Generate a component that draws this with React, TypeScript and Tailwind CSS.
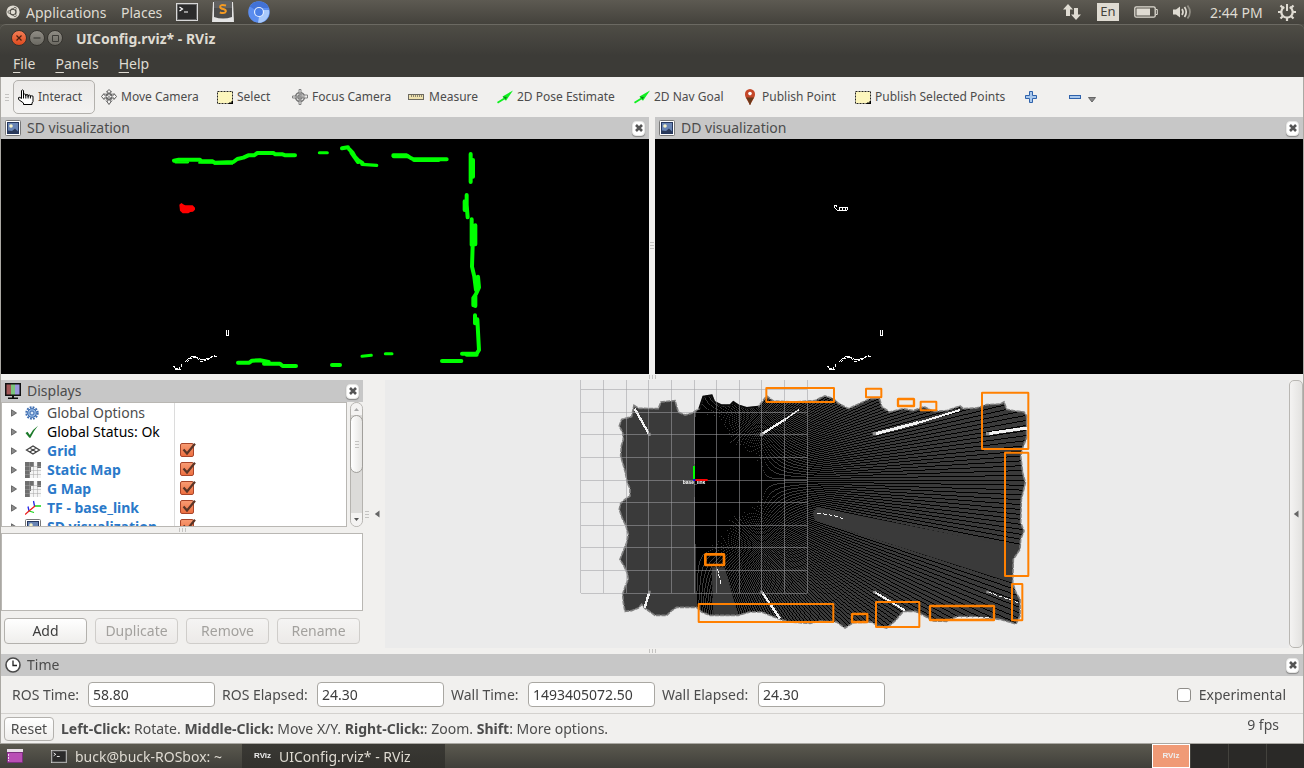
import React from 'react';
import type { ReactNode } from 'react';

/* ---------- small icons ---------- */

const UbuntuIcon = () => (
  <svg width="14" height="14" viewBox="0 0 14 14" aria-hidden="true">
    <circle cx="7" cy="7" r="6.6" fill="#dfdbd2" />
    <circle cx="7" cy="7" r="3" fill="none" stroke="#4c4a44" strokeWidth="1.3" />
    <g fill="#dfdbd2" stroke="#4c4a44" strokeWidth=".7">
      <circle cx="3.2" cy="7" r="1.3" />
      <circle cx="9" cy="3.6" r="1.3" />
      <circle cx="9" cy="10.4" r="1.3" />
    </g>
  </svg>
);

const TerminalIcon = ({ small = false }: { small?: boolean }) => (
  <svg width={small ? 16 : 22} height={small ? 13 : 18} viewBox="0 0 22 18" aria-hidden="true">
    <rect x=".5" y=".5" width="21" height="17" fill="#2b2b2b" stroke="#d8d8d8" />
    <rect x="1.5" y="1.5" width="19" height="15" fill="none" stroke="#8a8a8a" strokeWidth=".6" />
    <path d="M3.5 4l3 2-3 2M8 9h4" fill="none" stroke="#fff" strokeWidth="1.2" />
  </svg>
);

const SublimeIcon = () => (
  <svg width="24" height="22" viewBox="0 0 24 22" aria-hidden="true">
    <path d="M2 1h20l1 20H1z" fill="#e4e4e4" />
    <path d="M3 0h18v16q-9 3-18 0z" fill="#4d4d4d" />
    <path d="M3 0h18v7H3z" fill="#616161" />
    <path d="M15 4.500Q9 3 9.200 6q.2 1.500 3 2t2.600 2.500q-.8 2.500-6 1" fill="none" stroke="#f49a23" strokeWidth="2" />
  </svg>
);

const ChromiumIcon = () => (
  <svg width="22" height="22" viewBox="0 0 22 22" aria-hidden="true">
    <circle cx="11" cy="11" r="10.800" fill="#5b8def" />
    <path d="M11 11L1.800 5.500A10.800 10.800 0 0 1 20.800 7H11z" fill="#4272d6" />
    <path d="M11 16l4.500-7h5.500A10.800 10.800 0 0 1 10 21.800z" fill="#a8c9fb" />
    <circle cx="11" cy="11" r="5" fill="#e8f0fe" />
    <circle cx="11" cy="11" r="3.900" fill="#4a7fe6" />
  </svg>
);

const NetworkIcon = () => (
  <svg width="18" height="16" viewBox="0 0 18 16" fill="#dfdbd2" aria-hidden="true">
    <path d="M5 0l5 5.500H7V12H3V5.500H0zM13 16l-5-5.500h3V4h4v6.500h3z" />
  </svg>
);

const BatteryIcon = () => (
  <svg width="24" height="12" viewBox="0 0 24 12" aria-hidden="true">
    <rect x=".8" y=".8" width="20.400" height="10.400" rx="1.500" fill="none" stroke="#dfdbd2" strokeWidth="1.300" />
    <rect x="2.500" y="2.500" width="13.500" height="7" fill="#dfdbd2" />
    <path d="M22 3.500h1.300v5H22" fill="none" stroke="#dfdbd2" />
  </svg>
);

const SoundIcon = () => (
  <svg width="20" height="16" viewBox="0 0 20 16" aria-hidden="true">
    <path d="M0 5.500h3L7 2.500v11L3 10.500H0z" fill="#dfdbd2" />
    <path d="M9 5q2 3 0 6M11.500 3q3.500 5 0 10" fill="none" stroke="#dfdbd2" strokeWidth="1.700" />
    <path d="M14.500 1.500q5 6.500 0 13" fill="none" stroke="#918e85" strokeWidth="1.700" />
  </svg>
);

const PowerGearIcon = () => (
  <svg width="18" height="18" viewBox="0 0 18 18" fill="none" stroke="#dfdbd2" aria-hidden="true">
    <path d="M6.300 4A5.700 5.700 0 1 0 11.700 4" strokeWidth="2.200" />
    <path d="M9 1v7" strokeWidth="2" />
    <path d="M2.500 2.500l2.300 2.300M15.500 2.500l-2.300 2.300M0 9h3.500M14.500 9H18M2.500 15.500l2.300-2.300M15.500 15.500l-2.300-2.300M9 14.500V18" strokeWidth="2.200" />
  </svg>
);

const HandIcon = () => (
  <svg width="16" height="16" viewBox="0 0 16 16" aria-hidden="true" fill="#fff" stroke="#000">
    <path d="M3.500 9.500V1.500q1-1.200 2 0V7V5.500q1-1 2.300 0V7 6q1.200-1 2.300 0v1.500V6.500q1-1 2.300 0V8v-.8q1.200-.8 2.600 0V12.500l-1 1.500v1.500h-8.500V14L.6 10.500V8.500q1-.8 2.900 1z" />
    <path d="M5.500 7v2.500M7.800 7v2.500M10.100 7v2.500M12.400 8v1.500" fill="none" />
  </svg>
);

const MoveIcon = () => (
  <svg width="16" height="16" viewBox="0 0 16 16" aria-hidden="true" fill="#f4f3f2" stroke="#5d5d5d">
    <path d="M8 .5l2.500 2.500H9v3h4V4.500L15.500 7.500 13 10.500V9H9v3h1.500L8 15.500 5.500 12H7V9H3v1.500L.5 7.500 3 4.500V6h4V3H5.500z" />
    <circle cx="8" cy="7.500" r="3" fill="none" />
    <path d="M4.500 4l7 7.500M11.500 4l-7 7.500" strokeWidth=".6" />
  </svg>
);

const FocusIcon = () => (
  <svg width="16" height="16" viewBox="0 0 16 16" aria-hidden="true" fill="none" stroke="#777">
    <circle cx="8" cy="8" r="4.500" strokeWidth="1.500" />
    <circle cx="8" cy="8" r="2" />
    <path d="M7 .5h2V6h6.500v3H9v6.500H7V9H.5V7H7z" fill="#f1f0ee" fillOpacity=".6" strokeWidth=".9" />
    <path d="M8 4v8M4 8h8" />
  </svg>
);

const SelectIcon = () => (
  <svg width="16" height="16" viewBox="0 0 16 16" aria-hidden="true">
    <rect x=".5" y="2.500" width="15" height="12" fill="#fdf6bd" stroke="#222" strokeDasharray="2 1" />
    <path d="M16 12v3h-4v-1.500h2.500V12z" fill="#000" />
  </svg>
);

const RulerIcon = () => (
  <svg width="17" height="16" viewBox="0 0 17 16" aria-hidden="true">
    <rect x=".5" y="5.500" width="15" height="5" fill="#efe2ae" stroke="#6d6a60" />
    <path d="M3.500 6v2M5.500 6v2M7.500 6v2M9.500 6v2M11.500 6v2M13.500 6v2" stroke="#8c8672" />
  </svg>
);

const PoseIcon = () => (
  <svg width="16" height="16" viewBox="0 0 16 16" aria-hidden="true">
    <path d="M16 1.500L5.500 7.500l1 1.500L0 13l1 1.500 6.500-4 1.500 1.200z" fill="#10f020" />
    <path d="M6 7.500l4 .5-1.500 2.500z" fill="#0a8a18" />
  </svg>
);

const PinIcon = () => (
  <svg width="16" height="16" viewBox="0 0 16 16" aria-hidden="true">
    <path d="M8 0a5 5 0 0 1 5 5.200C13 9 9.500 12 8.200 16H7.800C6.500 12 3 9 3 5.200A5 5 0 0 1 8 0z" fill="#c5482a" />
    <path d="M4 8.500Q6.500 12 7.800 16h.4Q9.500 12 12 8.500z" fill="#6a3a1b" />
    <circle cx="8" cy="4.600" r="1.800" fill="#fff" />
  </svg>
);

const PlusIcon = () => (
  <svg width="12" height="12" viewBox="0 0 12 12" aria-hidden="true">
    <path d="M4.500.5h3v4h4v3h-4v4h-3v-4h-4v-3h4z" fill="#a9c8ec" stroke="#2f62ab" />
  </svg>
);

const MinusIcon = () => (
  <svg width="12" height="12" viewBox="0 0 12 12" aria-hidden="true">
    <rect x=".5" y="4.500" width="11" height="3" fill="#a9c8ec" stroke="#2f62ab" />
  </svg>
);

const PictureIcon = () => (
  <svg width="16" height="16" viewBox="0 0 16 16" aria-hidden="true">
    <rect x=".5" y=".5" width="15" height="15" rx="1" fill="#fff" stroke="#777" />
    <rect x="2.500" y="2.500" width="11" height="11" fill="#6884b4" stroke="#25375e" />
    <path d="M3 10.500l4 .5 3-2.500 3 3v1.500H3z" fill="#2a3959" />
    <circle cx="6" cy="6" r="1.800" fill="#f6f3c8" />
  </svg>
);

const MonitorIcon = () => (
  <svg width="16" height="16" viewBox="0 0 16 16" aria-hidden="true">
    <rect width="16" height="13" fill="#111" />
    <path d="M1.500 1.500H6v10H1.500z" fill="#a15656" />
    <path d="M6 1.500h4v10H6z" fill="#7cc47c" />
    <path d="M10 1.500h4.500v10H10z" fill="#9a97dc" />
    <path d="M7 13h2v1.500H7zM3 14.500h10V16H3z" fill="#111" />
  </svg>
);

const ClockIcon = () => (
  <svg width="16" height="16" viewBox="0 0 16 16" aria-hidden="true">
    <circle cx="8" cy="8" r="7" fill="#fff" stroke="#4a4a4a" strokeWidth="1.600" />
    <path d="M8 3.500V8.500h4" fill="none" stroke="#222" strokeWidth="1.300" />
  </svg>
);

const GearIcon = () => (
  <svg width="14" height="14" viewBox="0 0 14 14" aria-hidden="true" fill="none" stroke="#3b6cb1">
    <circle cx="7" cy="7" r="5.700" strokeWidth="2" strokeDasharray="1.800 1.180" />
    <circle cx="7" cy="7" r="4.400" fill="#8fb4e2" />
    <circle cx="7" cy="7" r="2" fill="#dbe8f7" />
  </svg>
);

const OkIcon = () => (
  <svg width="14" height="14" viewBox="0 0 14 14" aria-hidden="true">
    <path d="M.5 8l2-1.200L4.800 10Q8 4 13 .8 8.500 6 5.500 12.800H4.300z" fill="#1c7a2a" />
  </svg>
);

const GridIcon = () => (
  <svg width="16" height="16" viewBox="0 0 16 16" aria-hidden="true" fill="none" stroke="#444">
    <path d="M1.500 7L8 3l6.500 4L8 11zM4.700 5l6.600 4M11.300 5L4.700 9" strokeWidth="1.300" />
  </svg>
);

const MapIcon = () => (
  <svg width="16" height="16" viewBox="0 0 16 16" aria-hidden="true">
    <path d="M0 0h16v16H0z" fill="#f4f4f4" />
    <path d="M0 0h9v5H6v5H5v6H0zM12 0h4v6h-4z" fill="#6f6f6f" />
    <path d="M0 4.500h16M0 8.500h16M0 12.500h16M4.500 0v16M8.500 0v16M12.500 0v16" stroke="#a5a5a5" strokeWidth=".5" />
  </svg>
);

const TfIcon = () => (
  <svg width="16" height="16" viewBox="0 0 16 16" aria-hidden="true" fill="none" strokeWidth="1.300">
    <path d="M9.500 6L8.500 1M4 11L3 6.500" stroke="#2424e8" />
    <path d="M10 6h6M4 11l5 1.500" stroke="#16d416" />
    <path d="M10 6L4 11 0 14.500" stroke="#ee1c1c" />
  </svg>
);

/* ---------- shared controls ---------- */

const CloseButton = ({ label }: { label: string }) => (
  <button
    type="button"
    aria-label={label}
    className="flex h-[15px] w-[13px] items-center justify-center rounded-[4px] border border-[#e8e8e6] bg-white shadow-[0_1px_1px_#888]"
  >
    <svg width="8" height="8" viewBox="0 0 8 8" aria-hidden="true">
      <path d="M1 1l6 6M7 1L1 7" stroke="#555" strokeWidth="2.600" />
    </svg>
  </button>
);

const DockHeader = ({ title, icon }: { title: string; icon: ReactNode }) => (
  <header className="flex h-[22px] shrink-0 items-center justify-between bg-[#c7c7c7] pr-1 pl-1">
    <h2 className="flex items-center gap-1.5 text-[14px] leading-[22px] text-[#4c4c4c]">
      {icon}
      {title}
    </h2>
    <CloseButton label={`Close ${title}`} />
  </header>
);

const Grip = ({ vertical = false }: { vertical?: boolean }) => (
  <span className={vertical ? 'flex flex-col gap-[2px]' : 'flex gap-[2px]'} aria-hidden="true">
    {[0, 1, 2].map((i) => (
      <span key={i} className={vertical ? 'h-px w-1 bg-[#c4c3c1]' : 'h-1 w-px bg-[#c4c3c1]'} />
    ))}
  </span>
);

const tools = [
  { label: 'Move Camera', icon: <MoveIcon />, width: 'w-[116px]' },
  { label: 'Select', icon: <SelectIcon />, width: 'w-[75px]' },
  { label: 'Focus Camera', icon: <FocusIcon />, width: 'w-[116px]' },
  { label: 'Measure', icon: <RulerIcon />, width: 'w-[89px]' },
  { label: '2D Pose Estimate', icon: <PoseIcon />, width: 'w-[137px]' },
  { label: '2D Nav Goal', icon: <PoseIcon />, width: 'w-[108px]' },
  { label: 'Publish Point', icon: <PinIcon />, width: 'w-[113px]' },
  { label: 'Publish Selected Points', icon: <SelectIcon />, width: 'w-[170px]' },
];

/* ---------- detection views ---------- */

const FloorTrace = () => (
  <g fill="none" stroke="#fff" strokeWidth="3" shapeRendering="crispEdges">
    <path d="M69 710h6v6h15v-6h6v-8M106 696l8-8 10-8h12l18 10 10-2 12-3 12-6h12" strokeDasharray="10 2" />
    <path d="M110 697l8-10 10-3h12l14 11 12-3 14-6 6-6 10-3" strokeDasharray="9 3" />
    <path d="M76 718h16M229 600v17h7v-17" />
  </g>
);

const SdView = () => (
  <svg viewBox="1 139 648 235" className="h-[235px] w-full bg-black" preserveAspectRatio="xMinYMin slice" role="img" aria-label="SD visualization view">
    <g transform="translate(150 130) scale(.33333)">
      <g fill="none" stroke="#0f0" strokeWidth="12" strokeLinecap="round" strokeLinejoin="round">
        <path d="M72 92L86 89H150L154 94H188L194 98L250 96L262 87L280 83L295 76H312L322 69H370L376 73H398L406 76H435" />
        <path d="M76 97h38M148 98h40M194 101h52" strokeWidth="7" />
        <path d="M508 68h24" strokeWidth="9" />
        <path d="M576 55l18-3M597 57l10 10 8 14 10 10 12 8M604 68l20 28" />
        <path d="M636 103l44 3" strokeWidth="10" />
        <path d="M730 76H770L784 85L790 88H890M792 90h74" />
        <path d="M731 79h42" />
        <path d="M962 72V156M969 90V140M950 195V225L953 262M944 214V240" />
        <path d="M965 268V345M976 286V343M968 345L966 410L973 440L978 480M984 440L987 472L978 492L970 504V526M976 498V528" />
        <path d="M975 556V580M982 568L987 660L980 671H936M950 674H980" />
        <path d="M264 698H298L306 692L330 691L356 696M342 701H390L398 708H438" />
        <path d="M546 705h24" />
        <path d="M636 679l28-3M706 671h20" strokeWidth="9" />
        <path d="M876 693h58" />
      </g>
      <path d="M88 224l6-5 8 5 4 2h22l7 7v6l-6 6-8 1-6 4H98l-8-8z" fill="#f00" />
      <FloorTrace />
    </g>
  </svg>
);

const DdView = () => (
  <svg viewBox="1 139 648 235" className="h-[235px] w-full bg-black" preserveAspectRatio="xMinYMin slice" role="img" aria-label="DD visualization view">
    <g transform="translate(150 130) scale(.33333)">
      <FloorTrace />
      <path d="M91 234v-8h6v6M94 235l6 6h30v-9h-24M106 234v6M115 234v6M124 234v6" fill="none" stroke="#fff" strokeWidth="3" shapeRendering="crispEdges" />
    </g>
  </svg>
);

/* ---------- map view ---------- */

const outline =
  '222,88 235,97 295,98 303,78 345,74 355,108 375,117 395,112 418,98 430,62 455,58 463,78 485,88 510,88 520,78 535,88 560,96 595,92 620,60 640,75 700,78 765,74 780,66 795,60 820,68 835,82 865,98 900,82 930,68 958,66 965,92 988,108 1030,98 1060,104 1092,92 1120,106 1160,104 1200,90 1210,98 1250,96 1280,86 1320,84 1332,78 1340,100 1360,104 1392,108 1400,120 1400,185 1388,215 1382,240 1388,290 1396,320 1384,370 1382,440 1392,465 1382,490 1380,520 1360,550 1358,620 1368,650 1380,670 1380,720 1368,744 1320,730 1240,722 1190,722 1160,736 1120,735 1090,718 1065,706 1030,706 1005,735 980,756 955,750 935,738 880,740 855,756 830,738 780,735 750,742 690,738 660,730 640,722 605,708 570,708 535,718 450,718 425,708 410,694 350,694 335,704 320,718 285,718 255,697 245,685 235,696 215,704 195,706 190,680 188,655 196,630 205,610 202,592 192,570 180,550 188,530 200,500 205,475 198,450 186,425 178,400 182,382 195,370 210,360 210,338 202,320 195,285 182,240 184,210 190,190 188,170 178,150 185,130 215,122';

const origin = { x: 404, y: 313 };
const rayStep = 0.0149;
const rays = Array.from({ length: 209 }, (_, i) => (i - 104) * rayStep);
const gridX = [62, 130, 199, 266, 335, 404, 470, 538, 606, 673, 742];
const gridY = [41, 109, 175, 244, 313, 379, 448, 514, 583, 652];
const boxes = [
  [619, 36, 203, 42, 6],
  [918, 38, 46, 26, 6],
  [1014, 69, 48, 21, 7],
  [1082, 77, 47, 26, 6],
  [1266, 50, 139, 169, 6],
  [1335, 230, 70, 370, 6],
  [1356, 624, 31, 109, 6],
  [1110, 690, 192, 42, 7],
  [948, 678, 130, 75, 6],
  [876, 714, 46, 24, 7],
  [416, 684, 404, 54, 6],
  [436, 535, 56, 32, 8],
];

const MapView = () => (
  <svg viewBox="385 380 904 268" className="h-full min-h-[268px] w-full bg-[#ebebeb]" role="img" aria-label="Map view">
    <defs>
      <clipPath id="floor">
        <polygon points={outline} />
      </clipPath>
    </defs>
    <g transform="translate(560 376) scale(.33333)">
      <polygon points={outline} fill="#3a3a3a" />
      <g clipPath="url(#floor)">
        <g stroke="#000" strokeWidth="3" shapeRendering="crispEdges">
          {rays.map((a) => (
            <line key={a} x1={origin.x} y1={origin.y} x2={origin.x + 1100 * Math.cos(a)} y2={origin.y + 1100 * Math.sin(a)} />
          ))}
        </g>
        <path d="M772 394L1400 519V634L765 433L758 410zM455 574H494L535 720H460z" fill="#3a3a3a" />
      </g>
      <polygon points={outline} fill="none" stroke="#808080" strokeWidth="5" strokeDasharray="13 3" />
      <path d="M418 98L430 62L455 58L463 78L485 88H510L520 78L535 88L560 96L595 92" fill="none" stroke="#0a0a0a" strokeWidth="6" />
      <g stroke="#f1f1f1" strokeWidth="7" fill="none" shapeRendering="crispEdges">
        <path d="M224 98l44 78M606 174l70-44M268 648l-14 48M606 648l54 80" />
        <path d="M676 130l42-30" strokeWidth="4" />
        <path d="M944 174l130-34 M1284 173l116-17" strokeWidth="9" />
        <path d="M1070 142l130-40 M944 648l92 56" strokeWidth="6" />
        <path d="M472 578l12 50M772 411l50 8 32 10M1284 648l96 34M1190 724h100" strokeWidth="3" strokeDasharray="12 5" />
      </g>
      <path
        d="M264 170h8v10h-8zM600 170h10v10h-10zM938 168h10v10h-10zM1278 168h10v10h-10zM264 644h8v8h-8zM601 644h8v8h-8zM939 644h8v8h-8zM1279 644h8v8h-8z"
        fill="#8c8c8c"
      />
      <g stroke="#a0a0a4" strokeOpacity=".55" strokeWidth="3" fill="none" shapeRendering="crispEdges">
        {gridX.map((x) => (
          <path key={x} d={`M${x} 12V652`} />
        ))}
        {gridY.map((y) => (
          <path key={y} d={`M62 ${y}H742`} />
        ))}
      </g>
      <path d="M402 270V310" stroke="#0f0" strokeWidth="6" />
      <text x="368" y="325" fontSize="15" fontWeight="700" fill="#fff" fontFamily="Liberation Sans, sans-serif">
        base_link
      </text>
      <path d="M405 312H443" stroke="#f00" strokeWidth="6" />
      <path d="M400 312h6" stroke="#00f" strokeWidth="6" />
      <g fill="none" stroke="#ff8000">
        {boxes.map(([x, y, w, h, line]) => (
          <rect key={`${x}-${y}`} x={x} y={y} width={w} height={h} rx="1" strokeWidth={line} />
        ))}
      </g>
    </g>
  </svg>
);

/* ---------- displays panel ---------- */

const displays = [
  { label: 'Global Options', icon: <GearIcon />, tone: 'text-[#4c4c4c]', check: false },
  { label: 'Global Status: Ok', icon: <OkIcon />, tone: 'text-black', check: false },
  { label: 'Grid', icon: <GridIcon />, tone: 'font-bold text-[#2a79c9]', check: true },
  { label: 'Static Map', icon: <MapIcon />, tone: 'font-bold text-[#2a79c9]', check: true },
  { label: 'G Map', icon: <MapIcon />, tone: 'font-bold text-[#2a79c9]', check: true },
  { label: 'TF - base_link', icon: <TfIcon />, tone: 'font-bold text-[#2a79c9]', check: true },
  { label: 'SD visualization', icon: <PictureIcon />, tone: 'font-bold text-[#2a79c9]', check: true },
];

const DisplayCheck = ({ label }: { label: string }) => (
  <span className="relative flex h-4 w-4">
    <input
      type="checkbox"
      defaultChecked
      aria-label={`Show ${label}`}
      className="h-[14px] w-[14px] appearance-none rounded-[2px] border border-[#a8452a] bg-linear-to-b from-[#f79a72] to-[#ec6f40]"
    />
    <svg width="16" height="14" viewBox="0 0 16 14" className="pointer-events-none absolute top-0 left-0" aria-hidden="true">
      <path d="M3.500 6.500l3.500 4L15 .8" fill="none" stroke="#5a3527" strokeWidth="2.200" />
    </svg>
  </span>
);

const panelButton =
  'h-[26px] w-[83px] rounded-[4px] border bg-linear-to-b text-[14px] leading-5';

const DisplaysPanel = () => (
  <section className="flex w-[362px] shrink-0 flex-col">
    <DockHeader title="Displays" icon={<MonitorIcon />} />
    <div className="flex h-[125px] shrink-0 gap-[3px]">
      <ul className="min-w-0 flex-1 overflow-x-hidden overflow-y-auto border border-[#b9b7b3] bg-white [scrollbar-width:none]">
        {displays.map((d) => (
          <li key={d.label} className="flex h-[19px]">
            <div className="flex w-[173px] shrink-0 items-center border-r border-[#dcdcdc] pl-[9px]">
              <button type="button" aria-label={`Expand ${d.label}`} className="w-[14px]">
                <svg width="6" height="8" viewBox="0 0 6 8" aria-hidden="true">
                  <path d="M.5 .8L5.500 4 .5 7.200z" fill="#8a8a8a" stroke="#555" strokeWidth=".8" />
                </svg>
              </button>
              <span className="flex w-[22px] shrink-0">{d.icon}</span>
              <span className={`text-[14px] leading-[19px] whitespace-nowrap ${d.tone}`}>{d.label}</span>
            </div>
            <div className="flex items-center pl-[5px]">{d.check && <DisplayCheck label={d.label} />}</div>
          </li>
        ))}
      </ul>
      <div className="flex w-[13px] flex-col items-center rounded-full border border-[#b5b3af] bg-[#dcdbd9]" aria-hidden="true">
        <svg width="11" height="12" viewBox="0 0 11 12" className="rounded-t-full bg-[#f4f3f2]">
          <path d="M3 8h5L5.500 5z" fill="#aaa" />
        </svg>
        <div className="flex h-[58px] w-[13px] items-center justify-center rounded-full border border-[#a19f9b] bg-linear-to-r from-white to-[#e6e5e3]">
          <Grip vertical />
        </div>
        <span className="flex-1" />
        <svg width="11" height="13" viewBox="0 0 11 13" className="rounded-b-full bg-[#f4f3f2]">
          <path d="M3 5h5L5.500 8z" fill="#555" />
        </svg>
      </div>
    </div>
    <div className="flex h-1.5 shrink-0 items-center justify-center">
      <Grip />
    </div>
    <div className="h-[78px] shrink-0 border border-[#b9b7b3] bg-white" />
    <div className="flex gap-2 px-[3px] pt-[7px]">
      <button type="button" className={`${panelButton} border-[#b3b1ad] from-white to-[#efeeec] text-[#3c3c3c]`}>
        Add
      </button>
      {['Duplicate', 'Remove', 'Rename'].map((name) => (
        <button key={name} type="button" disabled className={`${panelButton} border-[#cfcdca] from-[#f5f4f3] to-[#eceae8] text-[#a3a19e]`}>
          {name}
        </button>
      ))}
    </div>
  </section>
);

const CollapseButton = ({ label }: { label: string }) => (
  <button type="button" aria-label={label} className="flex items-center">
    <svg width="6" height="8" viewBox="0 0 6 8" aria-hidden="true">
      <path d="M5.500 .5L.8 4l4.700 3.500z" fill="#666" />
    </svg>
  </button>
);

/* ---------- time panel ---------- */

const times = [
  { id: 'ros-time', label: 'ROS Time:', value: '58.80', width: 'w-[76px]' },
  { id: 'ros-elapsed', label: 'ROS Elapsed:', value: '24.30', width: 'w-[95px]' },
  { id: 'wall-time', label: 'Wall Time:', value: '1493405072.50', width: 'w-[77px]' },
  { id: 'wall-elapsed', label: 'Wall Elapsed:', value: '24.30', width: 'w-[96px]' },
];

const RvizMark = () => <span className="font-['Liberation_Sans'] text-[8px] leading-4 font-bold text-[#eee]">RViz</span>;

export default function App() {
  return (
    <div className="flex min-h-screen flex-col bg-[#f1f0ee] font-['Noto_Sans',sans-serif] text-[14px] text-[#4c4c4c]">
      <nav className="flex h-6 shrink-0 items-center justify-between bg-linear-to-b from-[#5d5a52] to-[#44423c] pr-2 pl-1.5 text-[#dfdbd2]">
        <div className="flex items-center">
          <button type="button" className="flex w-[115px] items-center gap-1.5">
            <UbuntuIcon />
            Applications
          </button>
          <button type="button" className="w-[55px] text-left">Places</button>
          <div className="flex items-center gap-[13px]">
            <button type="button" aria-label="Terminal"><TerminalIcon /></button>
            <button type="button" aria-label="Sublime Text"><SublimeIcon /></button>
            <button type="button" aria-label="Chromium"><ChromiumIcon /></button>
          </div>
        </div>
        <div className="flex items-center">
          <span className="w-[34px]"><NetworkIcon /></span>
          <span className="flex h-[18px] w-[22px] items-center justify-center bg-[#dfdbd2] text-[13px] text-[#45433d]">En</span>
          <span className="flex w-[54px] justify-end pr-[15px]"><BatteryIcon /></span>
          <span className="w-[37px]"><SoundIcon /></span>
          <span className="w-[68px] whitespace-nowrap">2:44 PM</span>
          <button type="button" aria-label="System"><PowerGearIcon /></button>
        </div>
      </nav>

      <header className="shrink-0 bg-linear-to-b from-[#4f4d46] to-[#3c3b37] to-60% text-[#dfdbd2]">
        <div className="flex h-[27px] items-center rounded-t-md border-t border-[#6b6962] pl-[11px]">
          <div className="flex gap-[2px]">
            <button type="button" aria-label="Close window" className="flex h-4 w-4 items-center justify-center rounded-full border border-[#35332e] bg-linear-to-b from-[#f47c54] to-[#dd4a1c]">
              <svg width="6" height="6" viewBox="0 0 6 6" aria-hidden="true"><path d="M.5.5l5 5M5.500.5l-5 5" stroke="#4b2010" strokeWidth="1.200" /></svg>
            </button>
            <button type="button" aria-label="Minimize window" className="flex h-4 w-4 items-center justify-center rounded-full border border-[#35332e] bg-linear-to-b from-[#908d85] to-[#6b6962]">
              <svg width="8" height="8" viewBox="0 0 8 8" aria-hidden="true"><path d="M.5 4h7" stroke="#3c3b37" strokeWidth="1.200" /></svg>
            </button>
            <button type="button" aria-label="Maximize window" className="flex h-4 w-4 items-center justify-center rounded-full border border-[#35332e] bg-linear-to-b from-[#908d85] to-[#6b6962]">
              <svg width="7" height="7" viewBox="0 0 7 7" aria-hidden="true"><path d="M.5.5h6v6h-6z" fill="none" stroke="#3c3b37" /></svg>
            </button>
          </div>
          <h1 className="pl-[13px] text-[14px] font-bold">UIConfig.rviz* - RViz</h1>
        </div>
        <div className="flex h-[26px] items-center gap-5 pl-[13px]">
          {['File', 'Panels', 'Help'].map((name) => (
            <button key={name} type="button" className="leading-5">
              <span className="underline underline-offset-[3px]">{name[0]}</span>
              {name.slice(1)}
            </button>
          ))}
        </div>
      </header>

      <main className="flex flex-1 flex-col border-x border-[#aaa8a3]">
        <div role="toolbar" aria-label="Tools" className="flex h-10 shrink-0 items-center pl-1 text-[12px]">
          <Grip vertical />
          <button type="button" className="ml-1 flex h-[34px] w-[82px] items-center gap-1 rounded-[5px] border border-[#b3b1ad] bg-linear-to-b from-[#ebe9e7] to-[#f4f3f2] pl-1">
            <HandIcon />
            Interact
          </button>
          <div className="flex pl-1.5">
            {tools.map((t) => (
              <button key={t.label} type="button" className={`flex items-center gap-1 whitespace-nowrap ${t.width}`}>
                <span className="shrink-0">{t.icon}</span>
                {t.label}
              </button>
            ))}
          </div>
          <button type="button" aria-label="Add tool" className="w-11"><PlusIcon /></button>
          <button type="button" aria-label="Remove tool" className="flex items-center gap-[7px]">
            <MinusIcon />
            <svg width="8" height="12" viewBox="0 0 8 12" aria-hidden="true"><path d="M.5 6.500h7L4 11z" fill="#888" stroke="#666" /></svg>
          </button>
        </div>

        <div className="flex shrink-0">
          <section className="min-w-0 flex-1">
            <DockHeader title="SD visualization" icon={<PictureIcon />} />
            <SdView />
          </section>
          <div className="flex w-1.5 items-center justify-center"><Grip vertical /></div>
          <section className="min-w-0 flex-1">
            <DockHeader title="DD visualization" icon={<PictureIcon />} />
            <DdView />
          </section>
        </div>
        <div className="flex h-1.5 shrink-0 items-center justify-center"><Grip /></div>

        <div className="flex flex-1">
          <DisplaysPanel />
          <div className="flex w-[22px] shrink-0 items-center gap-[5px] pl-0.5">
            <Grip vertical />
            <CollapseButton label="Collapse left dock" />
          </div>
          <section className="min-w-0 flex-1">
            <MapView />
          </section>
          <div className="flex w-[14px] shrink-0 items-center justify-center rounded-[5px] border border-[#b9b7b3] bg-linear-to-r from-[#f4f3f2] to-[#e3e2e0]">
            <CollapseButton label="Expand right dock" />
          </div>
        </div>
        <div className="flex h-1.5 shrink-0 items-center justify-center"><Grip /></div>

        <section className="shrink-0">
          <DockHeader title="Time" icon={<ClockIcon />} />
          <div className="flex h-[38px] items-center justify-between border-b border-[#d3d1ce] pr-[17px] pl-[11px]">
            <div className="flex items-center gap-[7px]">
              {times.map((t) => (
                <div key={t.id} className="flex items-center">
                  <label htmlFor={t.id} className={`whitespace-nowrap ${t.width}`}>{t.label}</label>
                  <input
                    id={t.id}
                    defaultValue={t.value}
                    className="h-[25px] w-[127px] rounded-[4px] border border-[#a9a7a2] bg-white px-1 text-[14px] text-[#3c3c3c]"
                  />
                </div>
              ))}
            </div>
            <label className="flex items-center gap-2">
              <input type="checkbox" className="h-[14px] w-[14px] appearance-none rounded-[3px] border border-[#8f8d89] bg-white" />
              Experimental
            </label>
          </div>
        </section>

        <footer className="flex h-[30px] shrink-0 items-center justify-between border-b border-[#aaa8a3] pr-6 pl-[3px]">
          <div className="flex items-center gap-[7px]">
            <button type="button" className="h-6 w-[50px] rounded-[4px] border border-[#b3b1ad] bg-linear-to-b from-white to-[#efeeec]">
              Reset
            </button>
            <p className="whitespace-nowrap">
              <b>Left-Click:</b> Rotate. <b>Middle-Click:</b> Move X/Y. <b>Right-Click:</b>: Zoom. <b>Shift</b>: More options.
            </p>
          </div>
          <span className="pb-2">9 fps</span>
        </footer>
      </main>

      <nav aria-label="Windows" className="flex h-6 shrink-0 justify-between bg-linear-to-b from-[#5b594f] to-[#403f3a] text-[#dfdbd2]">
        <div className="flex">
          <button type="button" aria-label="Show desktop" className="flex w-[41px] items-center pl-[7px]">
            <svg width="16" height="14" viewBox="0 0 16 14" aria-hidden="true">
              <rect width="16" height="14" rx="1" fill="#7d2f80" />
              <rect x="1" y="4" width="14" height="9" fill="#b94fb5" />
              <path d="M0 0h16v3H0z" fill="#e9dfe8" />
              <path d="M1.500 5v7" stroke="#f0d8f0" strokeDasharray="2 1" />
            </svg>
          </button>
          <button type="button" className="flex w-[201px] items-center gap-2 pl-2.5">
            <TerminalIcon small />
            buck@buck-ROSbox: ~
          </button>
          <button type="button" className="flex w-[203px] items-center gap-2 bg-linear-to-b from-[#3a3934] to-[#32312d] pl-3">
            <RvizMark />
            UIConfig.rviz* - RViz
          </button>
        </div>
        <div className="flex gap-px bg-[#43423d]">
          <button type="button" aria-label="Workspace 1" className="flex w-[38px] items-center justify-center border border-white bg-[#f09a76]">
            <RvizMark />
          </button>
          {[2, 3, 4].map((n) => (
            <button key={n} type="button" aria-label={`Workspace ${n}`} className="w-[37px] bg-[#2a2927]" />
          ))}
        </div>
      </nav>
    </div>
  );
}
